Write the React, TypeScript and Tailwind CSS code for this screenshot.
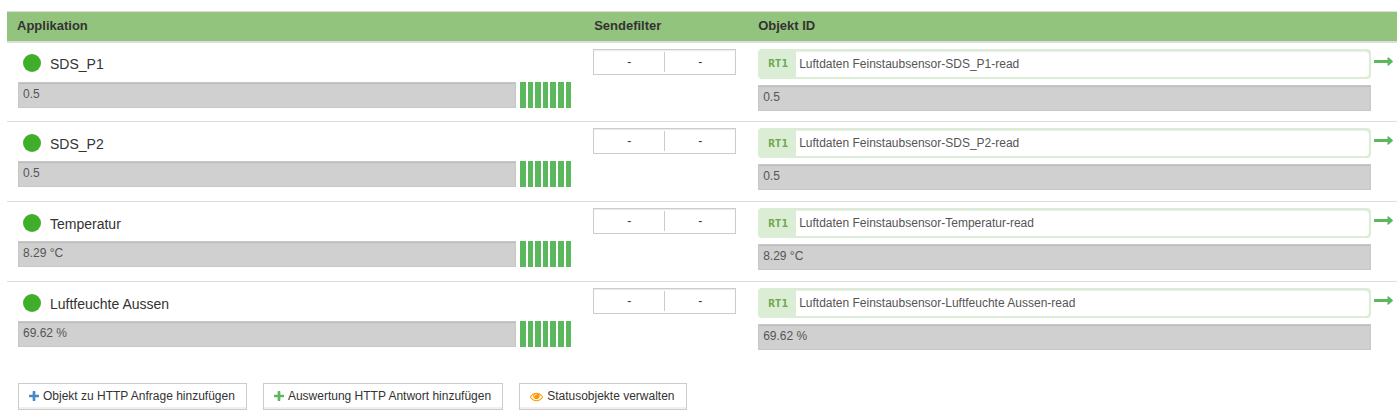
import React from "react";

type Row = { id: string; name: string; value: string };

const rows: Row[] = [
  { id: "sds-p1", name: "SDS_P1", value: "0.5" },
  { id: "sds-p2", name: "SDS_P2", value: "0.5" },
  { id: "temp", name: "Temperatur", value: "8.29 °C" },
  { id: "hum", name: "Luftfeuchte Aussen", value: "69.62 %" },
];

const BARS = [0, 1, 2, 3, 4, 5, 6];

const ValueField = ({ label, value }: { label: string; value: string }) => (
  <input
    readOnly
    aria-label={label}
    value={value}
    className="block h-[26px] w-full min-w-0 border border-[#c8c8c8] bg-[#d0d0d0] px-1 pb-[2px] text-xs text-[#555] shadow-[inset_0_1px_1px_rgba(0,0,0,0.1)] focus:outline-none"
  />
);

const FilterField = ({ name }: { name: string }) => (
  <div className="mr-3 flex h-[26px] items-stretch border border-[#ccc] bg-white shadow-[inset_0_1px_1px_rgba(0,0,0,0.08)]">
    <button
      type="button"
      aria-label={`${name} Filter`}
      className="my-[2px] flex-1 cursor-pointer border-r border-[#ccc] text-xs text-[#333]"
    >
      -
    </button>
    <button
      type="button"
      aria-label={`${name} Bedingung`}
      className="my-[2px] flex-1 cursor-pointer text-xs text-[#333]"
    >
      -
    </button>
  </div>
);

const PlusIcon = ({ className }: { className: string }) => (
  <svg viewBox="192 128 1408 1408" fill="currentColor" className={className}>
    <path d="M1600 736v192q0 40-28 68t-68 28h-416v416q0 40-28 68t-68 28h-192q-40 0-68-28t-28-68v-416h-416q-40 0-68-28t-28-68v-192q0-40 28-68t68-28h416v-416q0-40 28-68t68-28h192q40 0 68 28t28 68v416h416q40 0 68 28t28 68z" />
  </svg>
);

const EyeIcon = () => (
  <svg
    viewBox="0 0 1792 1792"
    fill="currentColor"
    className="h-[13px] w-[13px] text-[#f90]"
  >
    <path d="M1664 960q-152-236-381-353 61 104 61 225 0 185-131.5 316.5t-316.5 131.5-316.5-131.5-131.5-316.5q0-121 61-225-229 117-381 353 133 205 333.5 326.5t434.5 121.5 434.5-121.5 333.5-326.5zm-720-384q0-20-14-34t-34-14q-125 0-214.5 89.5t-89.5 214.5q0 20 14 34t34 14 34-14 14-34q0-86 61-147t147-61q20 0 34-14t14-34zm848 384q0 34-20 69-140 230-376.5 368.5t-499.5 138.5-499.5-139-376.5-368q-20-35-20-69t20-69q140-229 376.5-368t499.5-139 499.5 139 376.5 368q20 35 20 69z" />
  </svg>
);

const ArrowIcon = () => (
  <svg viewBox="0 0 19 9" fill="currentColor" className="h-[9px] w-[19px]">
    <path d="M.5 3h13V.8q0-.8.9-.5l4.3 3.8q.5.4 0 .8l-4.3 3.8q-.9.3-.9-.5V6H.5Q0 6 0 5.5v-2Q0 3 .5 3z" />
  </svg>
);

const ToolButton = ({
  icon,
  children,
}: {
  icon: React.ReactNode;
  children: React.ReactNode;
}) => (
  <button
    type="button"
    className="flex h-[27px] cursor-pointer items-center gap-1 border border-[#ccc] bg-white pr-[11px] pl-[10px] text-xs text-[#333] shadow-[inset_0_-2px_0_#f0f0f0]"
  >
    {icon}
    {children}
  </button>
);

const App = () => {
  return (
    <div className="bg-white pt-[11px] pl-[7px] font-['Liberation_Sans',Arial,sans-serif] text-[#333]">
      <table className="w-full table-fixed border-collapse text-left">
        <thead>
          <tr className="h-[30px] border-t border-b-2 border-t-[#ddd] border-b-[#ddd] bg-[#93c47d] text-[13px]">
            <th className="w-[41.45%] pb-[2px] pl-[10px] font-bold">Applikation</th>
            <th className="w-[165px] pb-[2px] pl-[11px] font-bold">Sendefilter</th>
            <th className="pb-[2px] pl-[10px] font-bold">Objekt ID</th>
          </tr>
        </thead>
        <tbody>
          {rows.map((row) => (
            <tr
              key={row.id}
              className="h-20 border-b border-[#ddd] align-top last:border-b-0"
            >
              <td className="pt-[6px] pr-3 pl-[11px]">
                <div className="flex h-[33px] items-center gap-[9px] pb-[2px] pl-[5px]">
                  <span className="mb-[2px] h-[18px] w-[18px] rounded-full bg-[#3fae2a]" />
                  <span className="text-sm">{row.name}</span>
                </div>
                <div className="flex gap-1">
                  <ValueField label={`${row.name} Wert`} value={row.value} />
                  <div className="flex w-[51px] shrink-0 gap-[2px]">
                    {BARS.map((bar) => (
                      <span key={bar} className="flex-1 bg-[#5cb85c]" />
                    ))}
                  </div>
                </div>
              </td>
              <td className="pt-[6px] pl-[10px]">
                <FilterField name={row.name} />
              </td>
              <td className="pt-[6px] pl-[10px]">
                <div className="flex gap-[3px] pr-1">
                  <div className="flex min-w-0 flex-1 flex-col gap-[6px]">
                    <label className="flex h-[30px] items-stretch rounded-[4px] bg-[#dcedd5] p-[2px] text-[#555]">
                      <span className="flex w-9 items-center justify-center pt-[2px] font-['DejaVu_Sans_Mono',monospace] text-[11px] font-bold text-[#6aa84f]">
                        RT1
                      </span>
                      <input
                        readOnly
                        value={`Luftdaten Feinstaubsensor-${row.name}-read`}
                        className="min-w-0 flex-1 rounded-r-[4px] bg-white px-[3px] text-xs shadow-[inset_0_1px_1px_rgba(0,0,0,0.08)] focus:outline-none"
                      />
                    </label>
                    <ValueField label={`${row.name} Objektwert`} value={row.value} />
                  </div>
                  <a
                    href="#"
                    aria-label={`${row.name} öffnen`}
                    className="pt-2 text-[#5cb85c]"
                  >
                    <ArrowIcon />
                  </a>
                </div>
              </td>
            </tr>
          ))}
        </tbody>
      </table>
      <div className="mt-[21px] flex flex-wrap gap-4 pb-2 pl-[11px]">
        <ToolButton icon={<PlusIcon className="h-[10px] w-[10px] text-[#428bca]" />}>
          Objekt zu HTTP Anfrage hinzufügen
        </ToolButton>
        <ToolButton icon={<PlusIcon className="h-[10px] w-[10px] text-[#5cb85c]" />}>
          Auswertung HTTP Antwort hinzufügen
        </ToolButton>
        <ToolButton icon={<EyeIcon />}>Statusobjekte verwalten</ToolButton>
      </div>
    </div>
  );
};

export default App;
